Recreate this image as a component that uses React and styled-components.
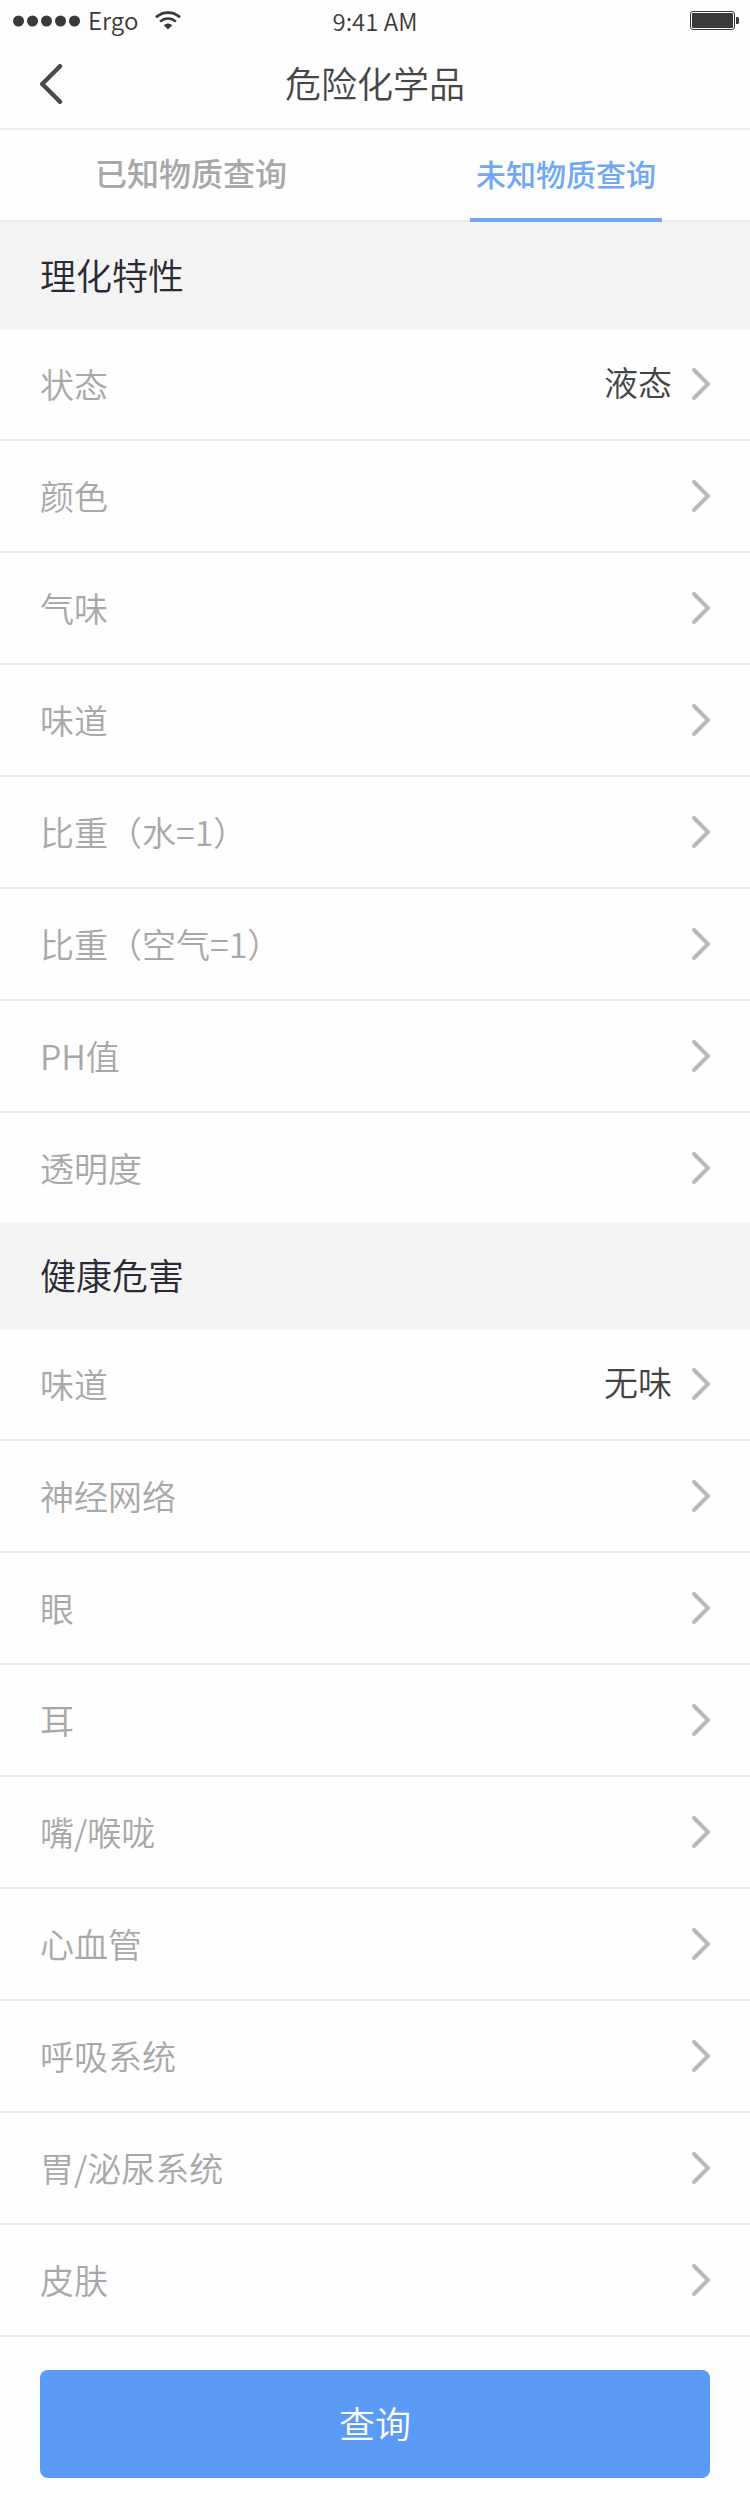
import React from 'react';
import styled, { createGlobalStyle } from 'styled-components';

const GlobalStyle = createGlobalStyle`
  * { box-sizing: border-box; }
  body {
    margin: 0;
    background: #fefefe;
    font-family: "Noto Sans CJK SC", sans-serif;
    font-weight: 350;
    color: #444;
  }
`;

const Screen = styled.div`
  width: 750px;
  height: 2510px;
  background: #fefefe;
`;

const StatusBar = styled.header`
  display: grid;
  grid-template-columns: 1fr auto 1fr;
  align-items: center;
  height: 40px;
  padding: 0 11px 0 13px;
  font-size: 24px;
  line-height: 35px;
  color: #3a3a3a;
`;

const Carrier = styled.div`
  display: flex;
  align-items: center;
  padding-top: 1px;
`;

const CarrierName = styled.span`
  margin: 0 17px 3px 8px;
`;

const Clock = styled.time`
  padding: 1px 2px 0 0;
`;

const BatterySlot = styled.div`
  display: flex;
  justify-content: flex-end;
  padding-top: 1px;
`;

const NavBar = styled.nav`
  display: grid;
  grid-template-columns: 80px 1fr 80px;
  align-items: center;
  height: 90px;
  border-bottom: 2px solid #ececec;
`;

const BackButton = styled.button`
  display: flex;
  padding: 0 0 0 39px;
  border: 0;
  background: none;
`;

const Title = styled.h1`
  margin: 0;
  padding-bottom: 4px;
  text-align: center;
  font-size: 36px;
  font-weight: 350;
  line-height: 52px;
  color: #464646;
`;

const Tabs = styled.div`
  display: flex;
  justify-content: space-between;
  height: 92px;
  padding: 0 88px 0 95px;
  border-bottom: 2px solid #e7ebef;
`;

const Tab = styled.div`
  display: flex;
  align-items: center;
  justify-content: center;
  width: 192px;
  height: 92px;
  padding-bottom: ${(p) => (p.$active ? 2 : 4)}px;
  font-size: ${(p) => (p.$active ? 30 : 32)}px;
  font-weight: 500;
  color: ${(p) => (p.$active ? '#70a8f6' : '#a8a8a8')};
  border-bottom: 4px solid ${(p) => (p.$active ? '#70a8f6' : 'transparent')};
`;

const SectionTitle = styled.h2`
  margin: 0;
  height: 108px;
  padding-left: 40px;
  background: #f4f4f4;
  font-size: 36px;
  font-weight: 350;
  line-height: 104px;
  color: #2b2a33;
`;

const List = styled.ul`
  margin: 0;
  padding: 0;
  list-style: none;
`;

const Row = styled.li`
  display: flex;
  align-items: center;
  height: 112px;
  padding: 0 40px;
  border-bottom: 2px solid #e7ebef;

  &:first-child {
    height: 111px;
    padding-bottom: 1px;
  }
  &:last-child {
    height: ${(p) => (p.$open ? 109 : 112)}px;
    padding-top: ${(p) => (p.$open ? 1 : 0)}px;
    border-bottom-width: ${(p) => (p.$open ? 0 : 2)}px;
  }
`;

const Label = styled.span`
  flex: 1;
  font-size: 34px;
  line-height: 50px;
  color: #a8a8a8;
`;

const Value = styled.span`
  margin: 0 20px 4px 0;
  font-size: 34px;
  line-height: 50px;
  color: #444;
`;

const Footer = styled.footer`
  padding: 33px 40px 32px;
`;

const SubmitButton = styled.button`
  display: block;
  width: 100%;
  height: 108px;
  padding: 0 0 4px;
  border: 0;
  border-radius: 8px;
  background: #5b9bf5;
  color: #fff;
  font: 350 36px/104px "Noto Sans CJK SC", sans-serif;
`;

const Signal = () => (
  <svg width="67" height="12" viewBox="0 0 67 12" fill="#3a3a3a">
    {[0, 1, 2, 3, 4].map((i) => (
      <circle key={i} cx={5.5 + i * 14} cy="6" r="5.5" />
    ))}
  </svg>
);

const Wifi = () => (
  <svg width="26" height="19" viewBox="0 0 26 19" fill="none" stroke="#3a3a3a">
    <path d="M1 6.3 A17.5 17.5 0 0 1 25 6.3" strokeWidth="2.8" />
    <path d="M5.2 10.6 A11.4 11.4 0 0 1 20.8 10.6" strokeWidth="2.6" />
    <path d="M8.7 14.3 A6.2 6.2 0 0 1 17.3 14.3 L13 18.5 Z" fill="#3a3a3a" stroke="none" />
  </svg>
);

const Battery = () => (
  <svg width="49" height="19" viewBox="0 0 49 19" fill="#3a3a3a">
    <rect x="0.5" y="0.5" width="44" height="18" rx="2.5" fill="none" stroke="#3a3a3a" />
    <rect x="2" y="2" width="41" height="15" rx="1" />
    <path d="M46 6h1.5a1.5 1.5 0 0 1 1.5 1.5v4a1.5 1.5 0 0 1-1.5 1.5H46z" />
  </svg>
);

const BackIcon = () => (
  <svg width="24" height="40" viewBox="0 0 24 40" fill="none" stroke="#4a4a4a" strokeWidth="4.4" strokeLinecap="round" strokeLinejoin="round">
    <path d="M21 2.2 3.2 20 21 37.8" />
  </svg>
);

const ChevronIcon = () => (
  <svg width="18" height="32" viewBox="0 0 18 32" fill="none" stroke="#b9b9b9" strokeWidth="4" strokeLinecap="round" strokeLinejoin="round">
    <path d="M2 2 16 16 2 30" />
  </svg>
);

const sections = [
  {
    title: '理化特性',
    open: true,
    rows: [['状态', '液态'], ['颜色'], ['气味'], ['味道'], ['比重（水=1）'], ['比重（空气=1）'], ['PH值'], ['透明度']],
  },
  {
    title: '健康危害',
    open: false,
    rows: [['味道', '无味'], ['神经网络'], ['眼'], ['耳'], ['嘴/喉咙'], ['心血管'], ['呼吸系统'], ['胃/泌尿系统'], ['皮肤']],
  },
];

export default function App() {
  return (
    <Screen>
      <GlobalStyle />
      <StatusBar>
        <Carrier>
          <Signal />
          <CarrierName>Ergo</CarrierName>
          <Wifi />
        </Carrier>
        <Clock>9:41 AM</Clock>
        <BatterySlot><Battery /></BatterySlot>
      </StatusBar>
      <NavBar>
        <BackButton aria-label="返回"><BackIcon /></BackButton>
        <Title>危险化学品</Title>
      </NavBar>
      <Tabs>
        <Tab>已知物质查询</Tab>
        <Tab $active>未知物质查询</Tab>
      </Tabs>
      {sections.map((section) => (
        <section key={section.title}>
          <SectionTitle>{section.title}</SectionTitle>
          <List>
            {section.rows.map(([label, value]) => (
              <Row key={label} $open={section.open}>
                <Label>{label}</Label>
                {value && <Value>{value}</Value>}
                <ChevronIcon />
              </Row>
            ))}
          </List>
        </section>
      ))}
      <Footer>
        <SubmitButton>查询</SubmitButton>
      </Footer>
    </Screen>
  );
}
